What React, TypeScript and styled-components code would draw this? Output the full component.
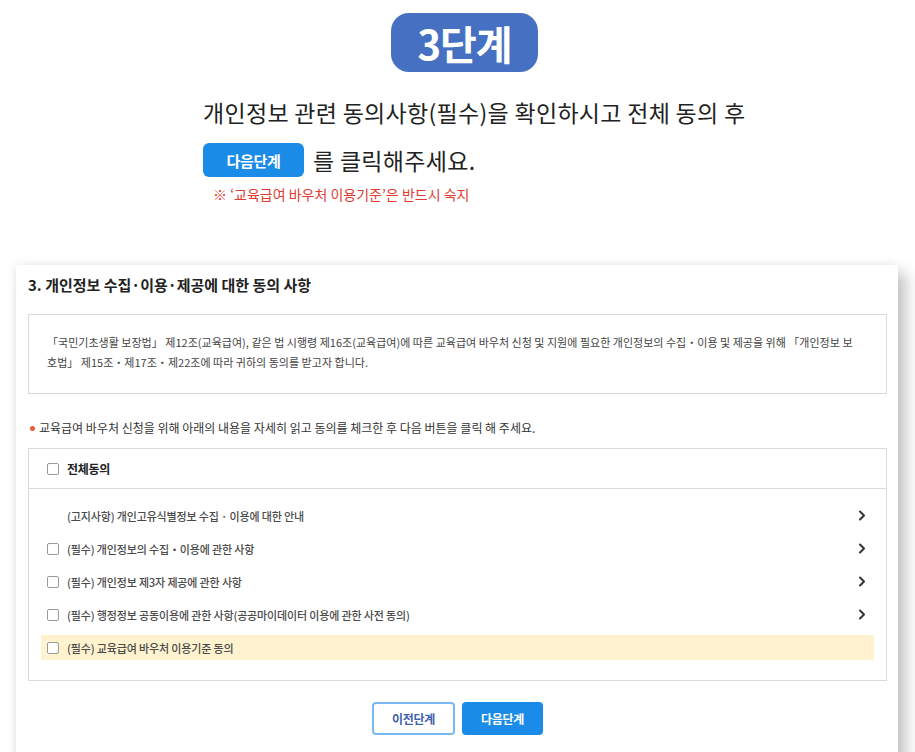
import React from "react";
import styled, { createGlobalStyle } from "styled-components";

const Global = createGlobalStyle`
  html, body { margin: 0; padding: 0; overflow: hidden; background: #fff; }
  body { font-family: "Noto Sans CJK KR", "Noto Sans", sans-serif; color: #222; }
  * { box-sizing: border-box; }
`;

const Page = styled.div`
  width: 915px;
  height: 752px;
  overflow: hidden;
  display: flex;
  flex-direction: column;
`;

const Hero = styled.section`
  display: flex;
  flex-direction: column;
  align-items: flex-start;
  padding: 13px 0 0 203px;
`;

const StepBadge = styled.div`
  margin-left: 188px;
  width: 147px;
  height: 59px;
  border-radius: 18px;
  background: #4671c3;
  color: #fff;
  font-size: 40px;
  font-weight: 700;
  letter-spacing: -1px;
  display: flex;
  align-items: center;
  justify-content: center;
  line-height: 1;
`;

const Lead = styled.p`
  margin: 25px 0 0;
  font-size: 23px;
  line-height: 30px;
  letter-spacing: 0.3px;
  color: #222;
  white-space: nowrap;
`;

const LeadRow = styled.div`
  margin-top: 16px;
  display: flex;
  align-items: center;
  gap: 9px;
  font-size: 23px;
  letter-spacing: 0.3px;
  color: #222;
`;

const InlineButton = styled.span`
  width: 101px;
  height: 34px;
  border-radius: 6px;
  background: #1a8be6;
  color: #fff;
  font-size: 15px;
  font-weight: 700;
  letter-spacing: -0.3px;
  display: inline-flex;
  align-items: center;
  justify-content: center;
`;

const Note = styled.p`
  margin: 8px 0 0 10px;
  font-size: 14px;
  line-height: 18px;
  color: #e23a32;
  letter-spacing: 0;
`;

const Card = styled.section`
  margin: 62px 0 0 16px;
  width: 882px;
  background: #fff;
  padding: 10px 11px 30px 12px;
  box-shadow: 8px 8px 14px rgba(0, 0, 0, 0.24), -3px -2px 8px rgba(0, 0, 0, 0.05);
`;

const CardTitle = styled.h2`
  margin: 0;
  font-size: 15px;
  line-height: 20px;
  font-weight: 700;
  letter-spacing: 0;
  color: #222;
`;

const InfoBox = styled.div`
  margin-top: 19px;
  border: 1px solid #d9d9d9;
  padding: 17px 18px 21px;
  font-size: 11px;
  line-height: 20px;
  letter-spacing: 0.02px;
  color: #444;
`;

const InfoLine = styled.div`
  white-space: nowrap;
`;

const Instruction = styled.p`
  margin: 26px 0 0 2px;
  display: flex;
  align-items: center;
  gap: 4px;
  font-size: 12px;
  line-height: 16px;
  letter-spacing: 0;
  color: #333;
`;

const RedDot = styled.span`
  width: 5px;
  height: 5px;
  border-radius: 50%;
  background: #f05a3a;
`;

const AgreeBox = styled.div`
  margin-top: 12px;
  border: 1px solid #dadada;
`;

const AgreeHeader = styled.div`
  height: 40px;
  border-bottom: 1px solid #dadada;
  display: flex;
  align-items: center;
  gap: 8px;
  padding-left: 18px;
  font-size: 12px;
  font-weight: 700;
  color: #222;
  letter-spacing: -0.3px;
`;

const AgreeList = styled.div`
  display: flex;
  flex-direction: column;
  gap: 8px;
  padding: 14px 12px 20px;
`;

const AgreeRow = styled.div<{ $highlight?: boolean }>`
  height: 25px;
  display: flex;
  align-items: center;
  gap: 8px;
  padding: 0 8px 0 6px;
  background: ${(p) => (p.$highlight ? "#fff2cf" : "transparent")};
  font-size: 11px;
  font-weight: 500;
  color: #4a4a4a;
  letter-spacing: -0.15px;
`;

const RowLabel = styled.span<{ $indent?: boolean }>`
  flex: 1;
  padding-left: ${(p) => (p.$indent ? "20px" : "0")};
`;

const Box = styled.span`
  width: 12px;
  height: 12px;
  border: 1px solid #9a9a9a;
  border-radius: 2px;
  background: #fff;
  flex-shrink: 0;
`;

const Chevron = () => (
  <svg width="8" height="11" viewBox="0 0 8 11" fill="none">
    <path d="M2 1.5 L6 5.5 L2 9.5" stroke="#333" strokeWidth="2" strokeLinecap="round" strokeLinejoin="round" />
  </svg>
);

const Actions = styled.div`
  margin-top: 21px;
  display: flex;
  justify-content: center;
  gap: 7px;
`;

const ActionButton = styled.button<{ $primary?: boolean }>`
  height: 33px;
  width: ${(p) => (p.$primary ? "81px" : "83px")};
  border-radius: 4px;
  border: 2px solid ${(p) => (p.$primary ? "#1a8be6" : "#79b8f0")};
  background: ${(p) => (p.$primary ? "#1a8be6" : "#fff")};
  color: ${(p) => (p.$primary ? "#fff" : "#3f5fae")};
  font-family: inherit;
  font-size: 12px;
  font-weight: 700;
  letter-spacing: -0.3px;
  padding: 0;
`;

const items: { label: string; check: boolean; chevron: boolean; highlight?: boolean }[] = [
  { label: "(고지사항) 개인고유식별정보 수집 · 이용에 대한 안내", check: false, chevron: true },
  { label: "(필수) 개인정보의 수집・이용에 관한 사항", check: true, chevron: true },
  { label: "(필수) 개인정보 제3자 제공에 관한 사항", check: true, chevron: true },
  { label: "(필수) 행정정보 공동이용에 관한 사항(공공마이데이터 이용에 관한 사전 동의)", check: true, chevron: true },
  { label: "(필수) 교육급여 바우처 이용기준 동의", check: true, chevron: false, highlight: true },
];

export default function App() {
  return (
    <Page>
      <Global />
      <Hero>
        <StepBadge>3단계</StepBadge>
        <Lead>개인정보 관련 동의사항(필수)을 확인하시고 전체 동의 후</Lead>
        <LeadRow>
          <InlineButton>다음단계</InlineButton>
          <span>를 클릭해주세요.</span>
        </LeadRow>
        <Note>※ ‘교육급여 바우처 이용기준’은 반드시 숙지</Note>
      </Hero>
      <Card>
        <CardTitle>3. 개인정보 수집·이용·제공에 대한 동의 사항</CardTitle>
        <InfoBox>
          <InfoLine>
            「국민기초생활 보장법」 제12조(교육급여), 같은 법 시행령 제16조(교육급여)에 따른 교육급여 바우처 신청 및 지원에 필요한 개인정보의 수집・이용 및 제공을 위해 「개인정보 보
          </InfoLine>
          <InfoLine>호법」 제15조・제17조・제22조에 따라 귀하의 동의를 받고자 합니다.</InfoLine>
        </InfoBox>
        <Instruction>
          <RedDot />
          교육급여 바우처 신청을 위해 아래의 내용을 자세히 읽고 동의를 체크한 후 다음 버튼을 클릭 해 주세요.
        </Instruction>
        <AgreeBox>
          <AgreeHeader>
            <Box />
            전체동의
          </AgreeHeader>
          <AgreeList>
            {items.map((it) => (
              <AgreeRow key={it.label} $highlight={it.highlight}>
                {it.check && <Box />}
                <RowLabel $indent={!it.check}>{it.label}</RowLabel>
                {it.chevron && <Chevron />}
              </AgreeRow>
            ))}
          </AgreeList>
        </AgreeBox>
        <Actions>
          <ActionButton>이전단계</ActionButton>
          <ActionButton $primary>다음단계</ActionButton>
        </Actions>
      </Card>
    </Page>
  );
}
